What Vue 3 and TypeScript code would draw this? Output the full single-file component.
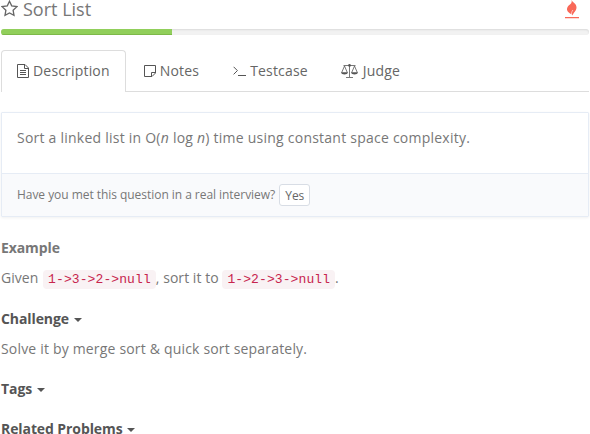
<script setup lang="ts">
import { ref } from 'vue'

type TabKey = 'description' | 'notes' | 'testcase' | 'judge'

const tabs: { key: TabKey; label: string }[] = [
  { key: 'description', label: 'Description' },
  { key: 'notes', label: 'Notes' },
  { key: 'testcase', label: 'Testcase' },
  { key: 'judge', label: 'Judge' },
]
const active = ref<TabKey>('description')
const progress = 29
</script>

<template>
  <main class="problem">
    <header class="heading">
      <svg class="star" width="17" height="17" viewBox="0 0 17 17">
        <path d="M8.5 1.3 10.7 5.9 15.9 6.6 12.1 10.2 13 15.3 8.5 12.9 4 15.3 4.9 10.2 1.1 6.6 6.3 5.9Z" />
      </svg>
      <h1>Sort List</h1>
      <svg class="flame" width="16" height="20" viewBox="0 0 16 20">
        <path d="M7.6 0C8.6 2.6 12.6 3.6 12.5 7.6C12.4 11.4 9.4 12.4 8.6 15.6C7.6 13.9 6.6 14.2 4.8 12.6C2.2 10.4 2.6 7.4 5 5.2C6.8 3.8 8.2 2.9 7.6 0Z" />
        <path class="slit" d="M8 15.8C6.9 13 7.8 11.6 8.9 10" />
        <rect x="1" y="17" width="14" height="1" />
        <rect class="glow" x="1" y="18" width="14" height="1" />
      </svg>
    </header>

    <div class="progress"><div class="bar" :style="{ width: progress + '%' }"></div></div>

    <nav class="tabs">
      <button
        v-for="tab in tabs"
        :key="tab.key"
        type="button"
        :class="['tab', tab.key, { active: tab.key === active }]"
        @click="active = tab.key"
      >
        <svg v-if="tab.key === 'description'" width="12" height="14" viewBox="0 0 12 14">
          <path d="M.5.5H8L11.5 4V13.5H.5ZM7.5.5V4.5H11.5M3 6.5H9M3 8.5H9M3 10.5H9" />
        </svg>
        <svg v-else-if="tab.key === 'notes'" width="12" height="12" viewBox="0 0 12 12">
          <path d="M.5.5H11.5V8L8 11.5H.5ZM7.5 11.5V7.5H11.5" />
        </svg>
        <svg v-else-if="tab.key === 'testcase'" width="13" height="10" viewBox="0 0 13 10">
          <path d="M.6.8 4.4 4.6.6 8.4M5 9.5H13" />
        </svg>
        <svg v-else width="17" height="14" viewBox="0 0 17 14">
          <path class="thin" d="M2.5 1.5H14.5M8.5 1V13M5 13.5H12M3.5 2 .7 8.5M3.5 2 6.3 8.5M13.5 2 10.7 8.5M13.5 2 16.3 8.5" />
          <circle class="fill" cx="8.5" cy="1.4" r="1.3" />
          <path class="fill" d="M0 8.2H7C6.6 11.1.4 11.1 0 8.2ZM10 8.2H17C16.6 11.1 10.4 11.1 10 8.2Z" />
        </svg>
        <span>{{ tab.label }}</span>
      </button>
    </nav>

    <section class="card">
      <p class="statement">Sort a linked list in O(<i>n</i> log <i>n</i>) time using constant space complexity.</p>
      <footer class="question">
        <span>Have you met this question in a real interview?</span>
        <button type="button" class="yes">Yes</button>
      </footer>
    </section>

    <h2 class="example">Example</h2>
    <p class="copy">Given <code>1-&gt;3-&gt;2-&gt;null</code>, sort it to <code>1-&gt;2-&gt;3-&gt;null</code>.</p>
    <h2>Challenge <b class="caret"></b></h2>
    <p class="copy">Solve it by merge sort &amp; quick sort separately.</p>
    <h2>Tags <b class="caret"></b></h2>
    <h2 class="related">Related Problems <b class="caret"></b></h2>
  </main>
</template>

<style>
body {
  background: #fff;
  overflow: hidden;
}
</style>

<style scoped>
.problem {
  box-sizing: border-box;
  width: 590px;
  height: 434px;
  padding: 0 1px;
  font: 14px/20px "Open Sans", sans-serif;
  color: #777;
}
.heading {
  display: flex;
  height: 29px;
}
.star {
  fill: none;
  stroke: #666;
  stroke-width: 1.3;
}
h1 {
  margin: 0 0 0 5px;
  font-size: 18px;
  line-height: 19px;
  font-weight: 400;
  color: #777;
}
.flame {
  margin: 0 9px 0 auto;
  fill: #f96858;
}
.slit {
  fill: none;
  stroke: #fff;
  stroke-width: 0.6;
}
.glow {
  opacity: 0.25;
}
.progress {
  height: 6px;
  border-radius: 3px;
  background: #f2f2f2;
  box-shadow: inset 0 1px 2px rgba(0, 0, 0, 0.1);
  overflow: hidden;
}
.bar {
  height: 100%;
  background: #91cf5b;
  box-shadow: inset 0 -1px 0 #7db949;
}
.tabs {
  display: flex;
  height: 42px;
  margin-top: 15px;
  box-shadow: inset 0 -1px #ddd;
}
.tab {
  display: flex;
  align-items: center;
  box-sizing: border-box;
  height: 42px;
  padding: 0 15px 2px;
  border: 1px solid transparent;
  border-bottom: 0;
  border-radius: 4px 4px 0 0;
  margin-right: 2px;
  background: none;
  font: inherit;
  letter-spacing: 0.18px;
  color: #666;
}
.tab.active {
  border-color: #ddd;
  background: #fff;
}
.tab svg {
  flex: none;
  margin-right: 4px;
  fill: none;
  stroke: #555;
}
.tab.judge svg {
  margin-left: -1px;
  margin-right: 5px;
}
.tab svg .thin {
  stroke-width: 0.8;
}
.tab svg .fill {
  fill: #555;
  stroke: none;
}
.card {
  box-sizing: border-box;
  height: 105px;
  margin-top: 20px;
  border: 1px solid #e6ecf5;
  border-radius: 1px;
  box-shadow: 0 1px 3px rgba(0, 0, 0, 0.06);
}
.statement {
  box-sizing: border-box;
  height: 60px;
  margin: 0;
  padding: 15px 15px 0;
  letter-spacing: 0.235px;
}
.question {
  display: flex;
  align-items: center;
  box-sizing: border-box;
  height: 43px;
  padding: 0 15px;
  border-top: 1px solid #e6ecf5;
  background: #f9fafc;
  font-size: 12px;
  letter-spacing: -0.045px;
}
.yes {
  box-sizing: border-box;
  height: 22px;
  margin-left: 4px;
  padding: 1px 5px 0;
  border: 1px solid #d8dde5;
  border-radius: 3px;
  background: #fff;
  font: 12px/18px "Open Sans", sans-serif;
  color: #666;
}
h2 {
  margin: 0 0 20px;
  font-size: 14px;
  line-height: 20px;
  font-weight: 700;
  letter-spacing: -0.09px;
  color: #555;
}
.example {
  margin: 21px 0 10px;
  color: #777;
}
.related {
  margin: 0;
  line-height: 18px;
  padding-top: 1px;
}
.copy {
  margin: -10px 0 20px;
  letter-spacing: 0.18px;
}
.example + .copy {
  height: 21px;
  margin-top: 0;
  letter-spacing: 0.05px;
}
code {
  padding: 2px 5px;
  border-radius: 4px;
  background: #f9f2f4;
  font: 13px/19px "Liberation Mono", monospace;
  letter-spacing: 0.1px;
  color: #c7254e;
}
code:first-of-type {
  margin-left: 1px;
}
.caret {
  display: inline-block;
  margin-left: 1px;
  border-top: 4px solid;
  border-right: 4px solid transparent;
  border-left: 4px solid transparent;
  vertical-align: middle;
}
</style>
